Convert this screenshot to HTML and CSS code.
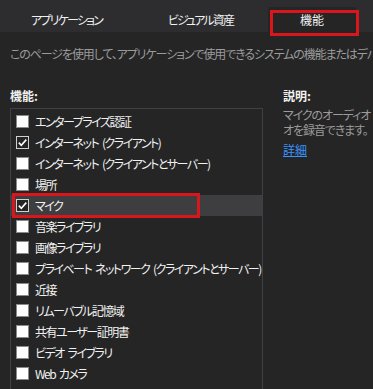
FILE: index.html
```html
<!DOCTYPE html>
<html lang="ja">
<head>
<meta charset="utf-8">
<link rel="stylesheet" href="styles.css">
</head>
<body>
<div class="tabs">
  <div class="tab t1">アプリケーション</div>
  <div class="tab t2">ビジュアル資産</div>
  <div class="tab t3 active">機能</div>
</div>
<div class="intro">このページを使用して、アプリケーションで使用できるシステムの機能またはデバイスを指定します。</div>
<div class="main">
  <div class="left">
    <div class="heading">機能:</div>
    <div class="list">
      <div class="row"><span class="cb"></span><span>エンタープライズ認証</span></div>
      <div class="row"><span class="cb checked"><svg viewBox="0 0 13 13" width="13" height="13"><path d="M2.8 6.6 L5.3 9.2 L10.3 3.6" fill="none" stroke="#fff" stroke-width="1.6"/></svg></span><span>インターネット (クライアント)</span></div>
      <div class="row"><span class="cb"></span><span>インターネット (クライアントとサーバー)</span></div>
      <div class="row"><span class="cb"></span><span>場所</span></div>
      <div class="row selected"><span class="cb checked"><svg viewBox="0 0 13 13" width="13" height="13"><path d="M2.8 6.6 L5.3 9.2 L10.3 3.6" fill="none" stroke="#fff" stroke-width="1.6"/></svg></span><span>マイク</span><span class="redbox"></span></div>
      <div class="row"><span class="cb"></span><span>音楽ライブラリ</span></div>
      <div class="row"><span class="cb"></span><span>画像ライブラリ</span></div>
      <div class="row"><span class="cb"></span><span>プライベート ネットワーク (クライアントとサーバー)</span></div>
      <div class="row"><span class="cb"></span><span>近接</span></div>
      <div class="row"><span class="cb"></span><span>リムーバブル記憶域</span></div>
      <div class="row"><span class="cb"></span><span>共有ユーザー証明書</span></div>
      <div class="row"><span class="cb"></span><span>ビデオ ライブラリ</span></div>
      <div class="row"><span class="cb"></span><span>Web カメラ</span></div>
    </div>
  </div>
  <div class="right">
    <div class="heading">説明:</div>
    <div class="desc">マイクのオーディオ フィードを使用してオーディ<br>オを録音できます。</div>
    <a class="more" href="#">詳細</a>
  </div>
</div>
</body>
</html>
```
FILE: styles.css
```css
html, body {
  margin: 0;
  padding: 0;
  width: 373px;
  height: 389px;
  overflow: hidden;
  background: #252526;
  font-family: "Noto Sans CJK JP", "Noto Sans", sans-serif;
  font-feature-settings: "palt";
  font-size: 12px;
  color: #f1f1f1;
}
.tabs {
  display: flex;
  height: 32px;
  background: #2d2d30;
  align-items: flex-end;
}
.tab {
  height: 25px;
  line-height: 25px;
  font-size: 12px;
  letter-spacing: -1.8px;
  text-align: center;
  color: #f1f1f1;
  position: relative;
}
.t1 { width: 133px; }
.t2 { width: 135px; }
.t3 { width: 88px; letter-spacing: 0; }
.active {
  background: #252526;
}
.active::after {
  content: "";
  position: absolute;
  left: 2px;
  top: 3px;
  width: 83px;
  height: 20px;
  border: 3px solid #d9161c;
}
.intro {
  white-space: nowrap;
  color: #9b9b9b;
  letter-spacing: -1.1px;
  padding: 14px 0 0 10px;
  height: 30px;
  line-height: 16px;
  box-sizing: border-box;
}
.main {
  display: flex;
  padding: 0 0 0 10px;
  margin-top: 25px;
}
.left {
  width: 253px;
  flex: none;
}
.heading {
  font-weight: bold;
  height: 17px;
  line-height: 17px;
  color: #f1f1f1;
}
.list {
  margin-top: 4px;
  border: 1px solid #3f3f46;
  padding: 2px 0 10px 0;
}
.row {
  position: relative;
  display: flex;
  align-items: center;
  height: 21px;
  padding-left: 5px;
  white-space: nowrap;
  letter-spacing: -1.5px;
  word-spacing: 2.5px;
}
.row.selected {
  background: #3e3e40;
}
.cb {
  width: 13px;
  height: 13px;
  box-sizing: border-box;
  background: #ffffff;
  border: 1px solid #8a8a8a;
  margin-right: 6px;
  flex: none;
  display: block;
}
.cb.checked {
  background: #252526;
  border-color: #d0d0d0;
  position: relative;
}
.cb svg {
  position: absolute;
  left: -1px;
  top: -1px;
}
.redbox {
  position: absolute;
  left: 1px;
  top: -2px;
  width: 182px;
  height: 19px;
  border: 3px solid #d9161c;
}
.right {
  margin-left: 20px;
  width: 200px;
  flex: none;
}
.desc {
  margin-top: 3px;
  color: #9b9b9b;
  line-height: 15px;
  white-space: nowrap;
  letter-spacing: -1.1px;
  word-spacing: 2.5px;
}
.more {
  display: inline-block;
  margin-top: 5px;
  color: #3794ff;
  text-decoration: underline;
  line-height: 15px;
}
```
